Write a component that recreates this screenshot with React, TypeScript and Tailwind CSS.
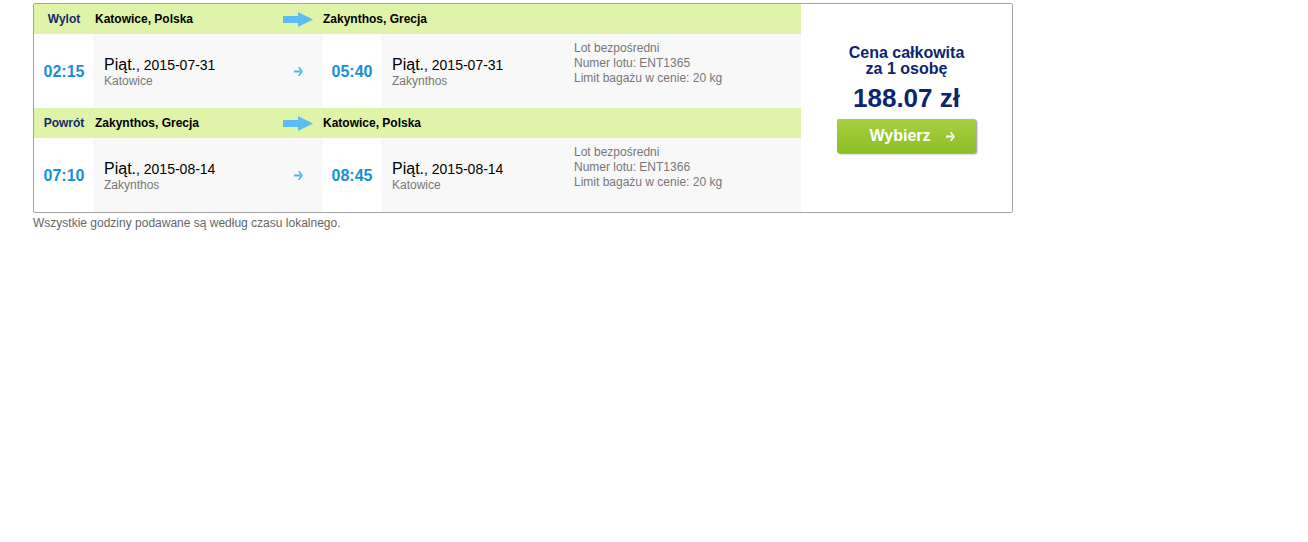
import type { ReactNode } from 'react'

type Leg = {
  label: string
  from: string
  to: string
  depTime: string
  arrTime: string
  day: string
  depDate: string
  arrDate: string
  flightNo: string
}

const legs: Leg[] = [
  {
    label: 'Wylot',
    from: 'Katowice, Polska',
    to: 'Zakynthos, Grecja',
    depTime: '02:15',
    arrTime: '05:40',
    day: 'Piąt.',
    depDate: '2015-07-31',
    arrDate: '2015-07-31',
    flightNo: 'ENT1365',
  },
  {
    label: 'Powrót',
    from: 'Zakynthos, Grecja',
    to: 'Katowice, Polska',
    depTime: '07:10',
    arrTime: '08:45',
    day: 'Piąt.',
    depDate: '2015-08-14',
    arrDate: '2015-08-14',
    flightNo: 'ENT1366',
  },
]

const cols = 'grid grid-cols-[60px_180px_48px_60px_182px_1fr]'

// Duża strzałka w nagłówku odcinka
function BigArrow() {
  return (
    <svg width="30" height="15" viewBox="0 0 30 15" aria-hidden>
      <rect x="0" y="4" width="16" height="7" fill="#5bbdf0" />
      <polygon points="15,0 30,7.5 15,15" fill="#5bbdf0" />
    </svg>
  )
}

// Mała strzałka między godzinami
function SmallArrow({ color }: { color: string }) {
  return (
    <svg width="9" height="9" viewBox="0 0 9 9" aria-hidden>
      <rect x="0" y="3.5" width="6" height="2" fill={color} />
      <polygon points="4,0 5.6,0 9,4.5 5.6,9 4,9 6.6,4.5" fill={color} />
    </svg>
  )
}

function DateCell({ day, date, city, children }: { day: string; date: string; city: string; children?: ReactNode }) {
  return (
    <div className="flex flex-col justify-center bg-[#f8f8f8] pl-[10px] pt-[2px]">
      <div className="leading-[18px] text-black">
        <span className="text-[16px]">{day}</span>
        <span className="text-[14px]">, {date}</span>
      </div>
      <div className="text-[12px] leading-[15px] text-[#777]">{city}</div>
      {children}
    </div>
  )
}

function LegRows({ leg }: { leg: Leg }) {
  const [fromCity] = leg.from.split(',')
  const [toCity] = leg.to.split(',')
  return (
    <>
      <div className={`${cols} h-[30px] items-center bg-[#dff3a9] text-[12px] font-bold`}>
        <div className="text-center text-[#16296b]">{leg.label}</div>
        <div className="pl-px text-black">{leg.from}</div>
        <div className="flex justify-center">
          <BigArrow />
        </div>
        <div className="col-span-3 pl-px text-black">{leg.to}</div>
      </div>
      <div className={`${cols} h-[74px]`}>
        <div className="flex items-center justify-center pt-[1px] text-[16px] font-bold text-[#1a8fd6]">
          {leg.depTime}
        </div>
        <DateCell day={leg.day} date={leg.depDate} city={fromCity} />
        <div className="flex items-center justify-center bg-[#f8f8f8] pt-[1px]">
          <SmallArrow color="#4fb5ec" />
        </div>
        <div className="flex items-center justify-center pt-[1px] text-[16px] font-bold text-[#1a8fd6]">
          {leg.arrTime}
        </div>
        <DateCell day={leg.day} date={leg.arrDate} city={toCity} />
        <div className="bg-[#f8f8f8] pl-[10px] pt-[7px] text-[12px] leading-[15px] text-[#777]">
          <div>Lot bezpośredni</div>
          <div>Numer lotu: {leg.flightNo}</div>
          <div>Limit bagażu w cenie: 20 kg</div>
        </div>
      </div>
    </>
  )
}

export default function App() {
  return (
    <div className="min-h-[542px] bg-white pl-[33px] pt-[3px] font-['Liberation_Sans',Arial,sans-serif]">
      <div className="flex w-[980px] overflow-hidden rounded-[2px] border border-[#a3a3a3]">
        <div className="flex w-[767px] flex-col">
          {legs.map(leg => (
            <LegRows key={leg.label} leg={leg} />
          ))}
        </div>
        <div className="flex flex-1 flex-col items-center bg-white pt-[41px] text-[#0c2570]">
          <div className="text-center text-[16px] font-bold leading-[16px]">
            Cena całkowita
            <br />
            za 1 osobę
          </div>
          <div className="mt-[8px] text-[26px] font-bold leading-[26px]">188.07 zł</div>
          <button
            type="button"
            className="mt-[8px] flex h-[34px] w-[139px] items-center justify-center gap-[15px] rounded-[2px] bg-gradient-to-b from-[#a8d143] to-[#8cbd22] pl-[11px] text-[16px] font-bold text-white shadow-[1px_1px_2px_rgba(0,0,0,0.45)]"
          >
            Wybierz
            <SmallArrow color="#ffffff" />
          </button>
        </div>
      </div>
      <p className="mt-[3px] text-[12px] leading-[14px] text-[#666]">
        Wszystkie godziny podawane są według czasu lokalnego.
      </p>
    </div>
  )
}
